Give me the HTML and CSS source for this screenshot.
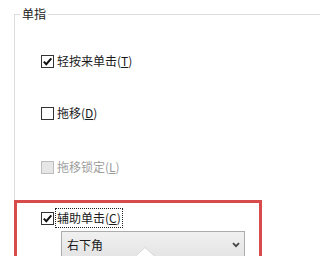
FILE: index.html
```html
<!DOCTYPE html>
<html lang="zh-CN">
<head>
<meta charset="utf-8">
<link rel="stylesheet" href="styles.css">
</head>
<body>
<div class="group">
  <div class="legend">单指</div>
  <div class="rows">
    <div class="row r1">
      <span class="cb"><svg viewBox="0 0 11 11" width="11" height="11"><path d="M1.8 5.6 L4.3 8.2 L9.3 2.4" fill="none" stroke="#111" stroke-width="2"/></svg></span>
      <span class="lbl">轻按来单击(<u>T</u>)</span>
    </div>
    <div class="row r2">
      <span class="cb"></span>
      <span class="lbl">拖移(<u>D</u>)</span>
    </div>
    <div class="row r3 disabled">
      <span class="cb"></span>
      <span class="lbl">拖移锁定(<u>L</u>)</span>
    </div>
  </div>
  <div class="highlight">
    <div class="row r4">
      <span class="cb"><svg viewBox="0 0 11 11" width="11" height="11"><path d="M1.8 5.6 L4.3 8.2 L9.3 2.4" fill="none" stroke="#111" stroke-width="2"/></svg></span>
      <span class="lbl focus">辅助单击(<u>C</u>)</span>
    </div>
    <div class="select">
      <span>右下角</span>
      <svg viewBox="0 0 8 6" width="8" height="6"><path d="M1 1.2 L4 4.2 L7 1.2" fill="none" stroke="#444" stroke-width="1.8"/></svg>
    </div>
  </div>
</div>
<svg class="pointer" viewBox="0 0 24 11" width="24" height="11"><polygon points="0.5,11 12,0.5 23.5,11" fill="#fff" stroke="#d8d8d8" stroke-width="1"/></svg>
</body>
</html>
```
FILE: styles.css
```css
html, body {
  margin: 0;
  padding: 0;
  height: 256px;
  overflow: hidden;
  background: #fff;
}
body {
  position: relative;
  font-family: "Noto Sans CJK SC", "Microsoft YaHei", sans-serif;
  font-size: 12px;
  color: #1a1a1a;
}
.group {
  margin: 14px 0 0 14px;
  border-top: 1px solid #dcdcdc;
  border-left: 1px solid #dcdcdc;
  height: 400px;
}
.legend {
  width: max-content;
  margin: -9px 0 0 5px;
  padding: 0 2px;
  line-height: 16px;
  background: #fff;
}
.rows {
  padding-left: 26px;
}
.row {
  display: flex;
  align-items: center;
  height: 18px;
}
.r1 { margin-top: 30px; }
.r2 { margin-top: 34px; }
.r3 { margin-top: 36px; }
.r4 { height: 20px; }
.cb {
  box-sizing: border-box;
  width: 13px;
  height: 13px;
  border: 1px solid #333;
  background: #fff;
  display: flex;
  align-items: center;
  justify-content: center;
  flex: none;
}
.lbl {
  margin-left: 3px;
  line-height: 16px;
  white-space: nowrap;
}
.lbl u {
  text-decoration: underline;
  text-underline-offset: 1px;
}
.disabled .cb {
  border-color: #bdbdbd;
  background: #e6e6e6;
}
.disabled .lbl {
  color: #9d9d9d;
}
.focus {
  margin-left: 1px;
  padding: 1px 1px;
  border: 1px dotted #222;
}
.highlight {
  box-sizing: border-box;
  width: 248px;
  margin: 24px 0 0 -1px;
  padding: 5px 0 0 24px;
  border: 3px solid #d84b4b;
  height: 120px;
}
.select {
  box-sizing: border-box;
  width: 184px;
  height: 27px;
  margin: 3px 0 0 20px;
  padding: 0 4px 0 5px;
  border: 1px solid #acacac;
  background: linear-gradient(#f1f1f1, #e4e4e4);
  display: flex;
  align-items: center;
  justify-content: space-between;
}
.pointer {
  position: absolute;
  left: 133px;
  top: 247px;
}
```
